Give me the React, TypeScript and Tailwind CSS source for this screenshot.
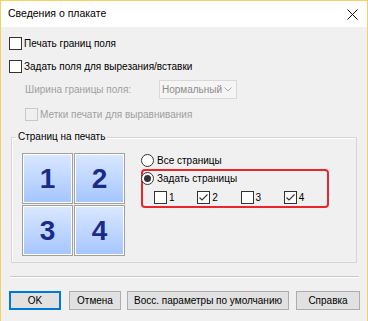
import React from 'react';

const font = { fontFamily: '"Liberation Sans", Arial, sans-serif' };

const Check = ({ checked = false, disabled = false }: { checked?: boolean; disabled?: boolean }) => (
  <div
    className={`w-[13px] h-[13px] shrink-0 border flex items-center justify-center ${
      disabled ? 'border-[#c8c8c8] bg-[#f0f0f0]' : 'border-[#333333] bg-white'
    }`}
  >
    {checked && (
      <svg width="11" height="11" viewBox="0 0 11 11">
        <path d="M1.5 5.5 L4 8 L9.5 2.5" fill="none" stroke="#333" strokeWidth="1.1" />
      </svg>
    )}
  </div>
);

const Radio = ({ checked = false }: { checked?: boolean }) => (
  <div className="w-[13px] h-[13px] shrink-0 rounded-full border border-[#333333] bg-white flex items-center justify-center">
    {checked && <div className="w-[7px] h-[7px] rounded-full bg-[#333333]" />}
  </div>
);

const Tile = ({ n }: { n: string }) => (
  <div className="w-[51px] h-[51px] border border-[#a0a0a0] p-px bg-white">
    <div className="w-full h-full bg-gradient-to-b from-[#d9e7ff] to-[#a6c6ff] flex items-center justify-center">
      <span className="text-[28px] font-bold text-[#1b2c88] leading-none" style={font}>
        {n}
      </span>
    </div>
  </div>
);

const Button = ({ label, w, primary = false }: { label: string; w: string; primary?: boolean }) => (
  <div
    className={`${w} h-[19px] flex items-center justify-center bg-[#e1e1e1] text-[10px] text-black whitespace-nowrap ${
      primary ? 'border-2 border-[#0078d7]' : 'border border-[#adadad]'
    }`}
  >
    {label}
  </div>
);

export default function App() {
  return (
    <div
      className="w-[368px] h-[321px] bg-[#f0f0f0] border-x border-t border-[#f3d162] flex flex-col text-black"
      style={font}
    >
      {/* title bar */}
      <div className="h-[26px] bg-white flex items-center justify-between pl-[7px] pr-[9px] shrink-0">
        <span className="text-[10.5px]">Сведения о плакате</span>
        <svg width="11" height="11" viewBox="0 0 11 11">
          <path d="M0.5 0.5 L10.5 10.5 M10.5 0.5 L0.5 10.5" stroke="#111" strokeWidth="1" />
        </svg>
      </div>

      <div className="flex flex-col pl-[8px] text-[10px] whitespace-nowrap">
        <div className="flex items-center gap-[2px] mt-[10px] h-[13px]">
          <Check />
          <span>Печать границ поля</span>
        </div>
        <div className="flex items-center gap-[2px] mt-[10px] h-[13px]">
          <Check />
          <span>Задать поля для вырезания/вставки</span>
        </div>
        <div className="flex items-center mt-[7px] h-[19px] pl-[16px]">
          <span className="w-[134px] text-[#a0a0a0]">Ширина границы поля:</span>
          <div className="w-[78px] h-[19px] border border-[#d9d9d9] bg-[#f5f5f5] flex items-center justify-between pl-[2px] pr-[4px] text-[#8c8c8c]">
            <span>Нормальный</span>
            <svg width="8" height="5" viewBox="0 0 8 5">
              <path d="M0.5 0.5 L4 4 L7.5 0.5" fill="none" stroke="#a8a8a8" strokeWidth="1" />
            </svg>
          </div>
        </div>
        <div className="flex items-center gap-[2px] mt-[9px] h-[13px] pl-[16px]">
          <Check disabled />
          <span className="text-[#a0a0a0]">Метки печати для выравнивания</span>
        </div>

        {/* group box */}
        <div className="relative mt-[16px] ml-[2px] w-[346px] h-[126px] border border-[#d5d5d5] shadow-[inset_1px_1px_0_#ffffff]">
          <span className="absolute -top-[8px] left-[4px] px-[2px] bg-[#f0f0f0] leading-[14px]">
            Страниц на печать
          </span>
          <div className="flex pt-[15px] pl-[10px]">
            <div className="grid grid-cols-2 gap-px w-[103px]">
              <Tile n="1" />
              <Tile n="2" />
              <Tile n="3" />
              <Tile n="4" />
            </div>
            <div className="flex flex-col ml-[15px] pt-[1px]">
              <div className="flex items-center gap-[3px] h-[13px] ml-[1px]">
                <Radio />
                <span>Все страницы</span>
              </div>
              <div className="mt-[2px] ml-[1px] w-[188px] h-[39px] border-2 border-[#e8262b] rounded-[4px] flex flex-col">
                <div className="flex items-center gap-[3px] h-[13px] mt-[1px] -ml-[2px]">
                  <Radio checked />
                  <span>Задать страницы</span>
                </div>
                <div className="flex items-center mt-[6px] pl-[11px]">
                  {[
                    ['1', false],
                    ['2', true],
                    ['3', false],
                    ['4', true],
                  ].map(([n, c]) => (
                    <div key={n as string} className="flex items-center gap-[2px] w-[50px] h-[13px]">
                      <Check checked={c as boolean} />
                      <span>{n as string}</span>
                    </div>
                  ))}
                </div>
              </div>
            </div>
          </div>
        </div>

        {/* separator */}
        <div className="mt-[13px] ml-[1px] w-[349px] border-t border-[#c8c8c8] border-b border-b-white" />

        {/* buttons */}
        <div className="flex items-center mt-[13px]">
          <Button label="OK" w="w-[52px]" primary />
          <div className="ml-[8px]">
            <Button label="Отмена" w="w-[52px]" />
          </div>
          <div className="ml-[6px]">
            <Button label="Восс. параметры по умолчанию" w="w-[162px]" />
          </div>
          <div className="ml-[7px]">
            <Button label="Справка" w="w-[64px]" />
          </div>
        </div>
      </div>
    </div>
  );
}
